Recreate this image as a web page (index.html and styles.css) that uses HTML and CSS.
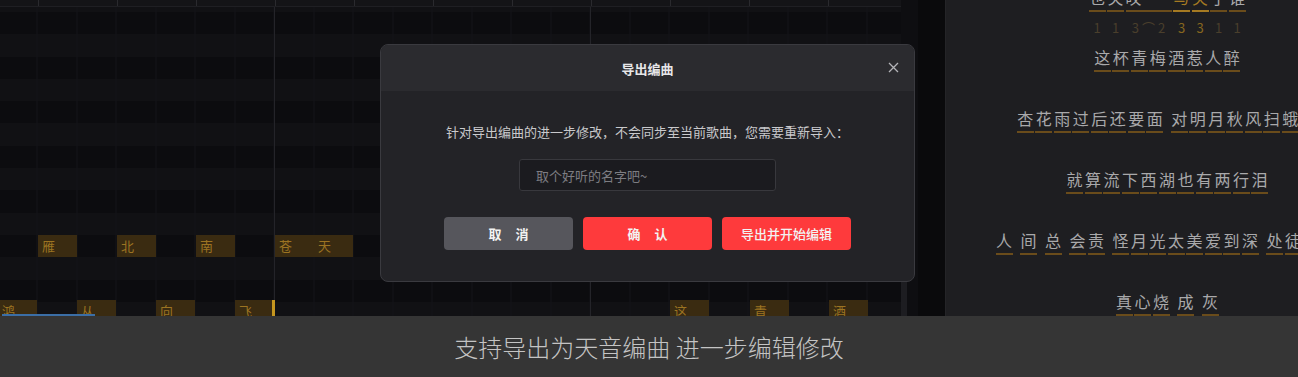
FILE: index.html
```html
<!DOCTYPE html>
<html lang="zh-CN">
<head>
    <meta charset="UTF-8">
    <meta name="viewport" content="width=device-width, initial-scale=1.0">
    <title>导出编曲</title>
    <link rel="stylesheet" href="styles.css">
</head>
<body>
    <div class="stage">
        <div class="roll">
            <div class="ruler"></div>
            <div class="grid">
                <div class="note" style="left:38px;top:228px">雁</div>
                <div class="note" style="left:117px;top:228px">北</div>
                <div class="note" style="left:196px;top:228px">南</div>
                <div class="note" style="left:275px;top:228px">苍</div>
                <div class="note" style="left:314px;top:228px">天</div>

                <div class="note" style="left:-2px;top:293px">鸿</div>
                <div class="note" style="left:77px;top:293px">从</div>
                <div class="note" style="left:156px;top:293px">向</div>
                <div class="note" style="left:235px;top:293px">飞</div>
                <div class="note" style="left:670px;top:293px">这</div>
                <div class="note" style="left:750px;top:293px">青</div>
                <div class="note" style="left:829px;top:293px">酒</div>

                <div class="playhead"></div>
                <div class="progress"></div>
            </div>
        </div>
        <div class="track">
            <div class="thumb"></div>
        </div>
        <div class="divider"></div>
        <div class="lyrics">
            <div class="line partial">
                <span>也</span><span>笑</span><span class="long">叹</span><span class="hot">与</span><span class="hot">笑</span><span>了</span><span>谁</span>
            </div>
            <div class="nums">
                <span>1</span><span>1</span><span class="long">3 ⌒ 2</span><span class="hot">3</span><span class="hot">3</span><span>1</span><span>1</span>
            </div>
            <div class="line first">
                <span>这</span><span>杯</span><span>青</span><span>梅</span><span>酒</span><span>惹</span><span>人</span><span>醉</span>
            </div>
            <div class="line">
                <span>杏</span><span>花</span><span>雨</span><span>过</span><span>后</span><span>还</span><span>要</span><span>面</span><i class="gap"></i><span>对</span><span>明</span><span>月</span><span>秋</span><span>风</span><span>扫</span><span>蛾</span><span>眉</span>
            </div>
            <div class="line">
                <span>就</span><span>算</span><span>流</span><span>下</span><span>西</span><span>湖</span><span>也</span><span>有</span><span>两</span><span>行</span><span>泪</span>
            </div>
            <div class="line">
                <span>人</span><i class="gap"></i><span>间</span><i class="gap"></i><span>总</span><i class="gap"></i><span>会</span><span>责</span><i class="gap"></i><span>怪</span><span>月</span><span>光</span><span>太</span><span>美</span><span>爱</span><span>到</span><span>深</span><i class="gap"></i><span>处</span><span>徒</span><span>伤</span><span>悲</span>
            </div>
            <div class="line">
                <span>真</span><span>心</span><span>烧</span><i class="gap"></i><span>成</span><i class="gap"></i><span>灰</span>
            </div>
        </div>
    </div>

    <div class="caption">支持导出为天音编曲 进一步编辑修改</div>

    <div class="modal">
        <div class="modal-header">
            <h2>导出编曲</h2>
            <button class="close">
                <svg width="11" height="11" viewBox="0 0 11 11">
                    <path d="M1 1 L10 10 M10 1 L1 10" stroke="#b4b4b8" stroke-width="1.3" fill="none"/>
                </svg>
            </button>
        </div>
        <div class="modal-body">
            <p>针对导出编曲的进一步修改，不会同步至当前歌曲，您需要重新导入：</p>
            <input type="text" placeholder="取个好听的名字吧~">
            <div class="actions">
                <button class="btn cancel spaced">取消</button>
                <button class="btn primary spaced">确认</button>
                <button class="btn primary light">导出并开始编辑</button>
            </div>
        </div>
    </div>
</body>
</html>
```

FILE: styles.css
```css
body {
    font-family: "Noto Sans CJK SC", "Noto Sans", sans-serif;
    margin: 0;
    padding: 0;
    width: 1298px;
    height: 377px;
    overflow: hidden;
    position: relative;
    background-color: #0b0b0d;
}

.stage {
    display: flex;
    height: 316px;
    overflow: hidden;
}

/* piano roll */
.roll {
    width: 901px;
    flex-shrink: 0;
    display: flex;
    flex-direction: column;
}

.ruler {
    height: 6px;
    border-bottom: 1px solid #1f1f23;
    background-color: #141417;
    background-image: repeating-linear-gradient(90deg, transparent 0 78px, #2a2a2e 78px 79px);
    background-position: -40px 0;
}

.grid {
    flex: 1;
    position: relative;
    background-image:
        repeating-linear-gradient(90deg, transparent 0 315px, #242429 315px 316px),
        repeating-linear-gradient(90deg, transparent 0 38.5px, #141418 38.5px 39.5px),
        repeating-linear-gradient(180deg, #0c0c0f 0 22.3px, #111114 22.3px 44.6px);
    background-position: -41px 0, -1.5px 0, 0 5px;
}

.note {
    position: absolute;
    width: 35px;
    height: 22px;
    padding-left: 4px;
    line-height: 22px;
    font-size: 13px;
    color: #9c7422;
    background-color: #3a2b11;
}

.playhead {
    position: absolute;
    left: 272px;
    top: 293px;
    width: 3px;
    height: 16px;
    background-color: #c5961f;
}

.progress {
    position: absolute;
    left: 2px;
    top: 307px;
    width: 93px;
    height: 2px;
    background-color: #3b6ea6;
}

.track {
    width: 17px;
    flex-shrink: 0;
    background-color: #0e0e11;
    position: relative;
}

.thumb {
    position: absolute;
    left: 0;
    top: 150px;
    width: 6px;
    bottom: 0;
    background-color: #1d1d21;
}

.divider {
    width: 27px;
    flex-shrink: 0;
    background-color: #0a0a0c;
}

/* lyrics panel */
.lyrics {
    width: 442px;
    flex-shrink: 0;
    background-color: #1e1e21;
    border-left: 1px solid #242427;
    display: flex;
    flex-direction: column;
}

.line {
    height: 61px;
    display: flex;
    align-items: flex-end;
    justify-content: center;
    white-space: nowrap;
}

.line.partial {
    height: 12px;
}

.line.first {
    height: 30px;
}

.line span {
    display: inline-block;
    width: 17px;
    margin: 0 0.75px;
    padding-bottom: 3px;
    line-height: 20px;
    font-size: 16px;
    text-align: center;
    color: #a9a9ab;
    border-bottom: 2px solid #6a4c1b;
}

.line span.long {
    width: 46px;
    text-align: left;
}

.line span.hot {
    color: #a57a22;
    border-bottom-color: #a57a22;
}

.gap {
    display: inline-block;
    width: 6px;
}

.nums {
    height: 30px;
    display: flex;
    align-items: center;
    justify-content: center;
}

.nums span {
    display: inline-block;
    width: 17px;
    margin: 0 0.75px;
    font-size: 13px;
    text-align: center;
    color: #4a3f2c;
}

.nums span.long {
    width: 46px;
}

.nums span.hot {
    color: #86661f;
}

/* bottom caption */
.caption {
    height: 61px;
    line-height: 61px;
    text-align: center;
    font-size: 24px;
    font-weight: 300;
    color: #c4c4c4;
    background-color: #353535;
}

/* export dialog */
.modal {
    position: absolute;
    left: 380px;
    top: 44px;
    width: 533px;
    height: 236px;
    border: 1px solid #3a3a3f;
    border-radius: 8px;
    overflow: hidden;
    background-color: #232327;
    color: #fff;
}

.modal-header {
    height: 46px;
    position: relative;
    background-color: #2b2b2f;
    display: flex;
    justify-content: center;
    align-items: center;
}

.modal-header h2 {
    margin: 0;
    font-size: 13px;
    font-weight: bold;
    color: #e6e6e8;
}

.close {
    position: absolute;
    right: 15px;
    top: 17px;
    padding: 0;
    border: none;
    background-color: transparent;
    line-height: 0;
    cursor: pointer;
}

.modal-body {
    display: flex;
    flex-direction: column;
    align-items: center;
}

.modal-body p {
    margin: 31px 0 0;
    font-size: 13px;
    line-height: 20px;
    color: #c9c9cc;
}

.modal-body input {
    margin-top: 17px;
    width: 257px;
    height: 32px;
    box-sizing: border-box;
    padding: 0 16px;
    font-family: inherit;
    font-size: 13px;
    color: #ddd;
    background-color: #1b1b1f;
    border: 1px solid #38383d;
    border-radius: 3px;
    outline: none;
}

.modal-body input::placeholder {
    color: #7d7d82;
}

.actions {
    display: flex;
    gap: 10px;
    margin-top: 26px;
}

.btn {
    width: 129px;
    height: 33px;
    border: none;
    border-radius: 4px;
    font-family: inherit;
    font-size: 13px;
    font-weight: bold;
    color: #f2f2f2;
    cursor: pointer;
}

.btn.spaced {
    letter-spacing: 14px;
    text-indent: 14px;
}

.btn.cancel {
    background-color: #56565c;
}

.btn.primary {
    background-color: #fe3a3c;
}

.btn.light {
    font-weight: 500;
}
```
